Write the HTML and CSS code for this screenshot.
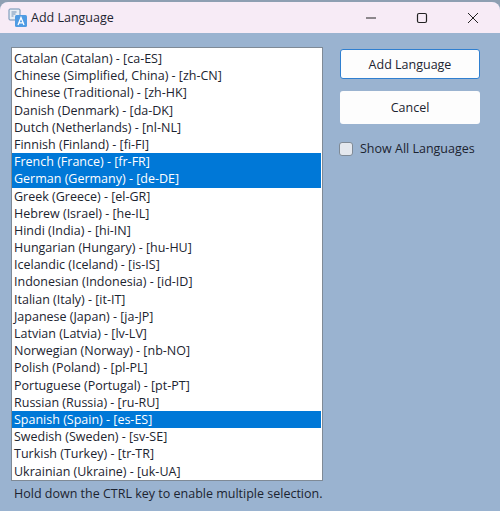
FILE: index.html
```html
<!DOCTYPE html>
<html lang="en">
<head>
    <meta charset="UTF-8">
    <meta name="viewport" content="width=device-width, initial-scale=1.0">
    <title>Add Language</title>
    <link rel="stylesheet" href="styles.css">
</head>
<body>
    <div class="dialog">
        <div class="titlebar">
            <svg class="app-icon" width="20" height="20" viewBox="0 0 20 20">
                <rect x="1" y="1" width="11" height="11" rx="1" fill="#e8eef5" stroke="#6d8fb3"/>
                <path d="M3.500 4h5M3.500 6h4M3.500 8h2" fill="none" stroke="#6d8fb3"/>
                <rect x="7" y="7" width="12" height="12" rx="1.500" fill="#4f9be3"/>
                <path d="M10 17l3-7.500 3 7.500M11 14.800h4" fill="none" stroke="#fff" stroke-width="1.300"/>
            </svg>
            <span class="title">Add Language</span>
            <div class="window-buttons">
                <svg width="12" height="12" viewBox="0 0 12 12"><path d="M1 6h10" stroke="#222" fill="none"/></svg>
                <svg width="12" height="12" viewBox="0 0 12 12"><rect x="1.500" y="1.500" width="9" height="9" rx="1.500" stroke="#222" stroke-width="1.200" fill="none"/></svg>
                <svg width="12" height="12" viewBox="0 0 12 12"><path d="M1 1l10 10M11 1L1 11" stroke="#222" fill="none"/></svg>
            </div>
        </div>
        <div class="content">
            <div class="left">
                <div class="list">
                    <div class="item">Catalan (Catalan) - [ca-ES]</div>
                    <div class="item">Chinese (Simplified, China) - [zh-CN]</div>
                    <div class="item">Chinese (Traditional) - [zh-HK]</div>
                    <div class="item">Danish (Denmark) - [da-DK]</div>
                    <div class="item">Dutch (Netherlands) - [nl-NL]</div>
                    <div class="item">Finnish (Finland) - [fi-FI]</div>
                    <div class="item selected">French (France) - [fr-FR]</div>
                    <div class="item selected">German (Germany) - [de-DE]</div>
                    <div class="item">Greek (Greece) - [el-GR]</div>
                    <div class="item">Hebrew (Israel) - [he-IL]</div>
                    <div class="item">Hindi (India) - [hi-IN]</div>
                    <div class="item">Hungarian (Hungary) - [hu-HU]</div>
                    <div class="item">Icelandic (Iceland) - [is-IS]</div>
                    <div class="item">Indonesian (Indonesia) - [id-ID]</div>
                    <div class="item">Italian (Italy) - [it-IT]</div>
                    <div class="item">Japanese (Japan) - [ja-JP]</div>
                    <div class="item">Latvian (Latvia) - [lv-LV]</div>
                    <div class="item">Norwegian (Norway) - [nb-NO]</div>
                    <div class="item">Polish (Poland) - [pl-PL]</div>
                    <div class="item">Portuguese (Portugal) - [pt-PT]</div>
                    <div class="item">Russian (Russia) - [ru-RU]</div>
                    <div class="item selected">Spanish (Spain) - [es-ES]</div>
                    <div class="item">Swedish (Sweden) - [sv-SE]</div>
                    <div class="item">Turkish (Turkey) - [tr-TR]</div>
                    <div class="item">Ukrainian (Ukraine) - [uk-UA]</div>
                </div>
                <div class="hint">Hold down the CTRL key to enable multiple selection.</div>
            </div>
            <div class="side">
                <div class="btn primary">Add Language</div>
                <div class="btn">Cancel</div>
                <div class="check-row">
                    <span class="check"></span>
                    <span>Show All Languages</span>
                </div>
            </div>
        </div>
    </div>
</body>
</html>
```

FILE: styles.css
```css
body {
    margin: 0;
    width: 500px;
    height: 511px;
    overflow: hidden;
    background: #8e9fb2;
    font-family: "Open Sans", "Noto Sans", sans-serif;
    font-size: 12.5px;
    color: #1c2430;
}
.dialog {
    height: 509px;
    margin-top: 2px;
    background: #9ab3d0;
    border-radius: 8px 8px 0 0;
}
.titlebar {
    display: flex;
    align-items: center;
    height: 31px;
    background: #f7ebf6;
    border-radius: 8px 8px 0 0;
    padding: 0 21px 0 8px;
}
.app-icon {
    margin-right: 3px;
}
.title {
    flex: 1;
}
.window-buttons {
    display: flex;
    gap: 39px;
}
.content {
    display: flex;
    padding: 14px 0 0 11px;
}
.left {
    width: 312px;
}
.list {
    background: #fff;
    border: 1px solid #7f8a96;
    height: 434px;
    padding-top: 2px;
    box-sizing: border-box;
}
.item {
    height: 17.190px;
    line-height: 17.190px;
    padding-left: 2px;
    margin-right: 1px;
    white-space: nowrap;
}
.item.selected {
    background: #0078d7;
    color: #fff;
}
.hint {
    margin: 4px 0 0 3px;
    white-space: nowrap;
}
.side {
    display: flex;
    flex-direction: column;
    margin: 2px 0 0 17px;
    width: 140px;
}
.btn {
    display: flex;
    align-items: center;
    justify-content: center;
    height: 33px;
    background: #fdfdfd;
    border-radius: 3px;
    margin-bottom: 16px;
}
.btn.primary {
    height: 28px;
    border: 1px solid #2f7fd0;
    margin-bottom: 12px;
}
.check-row {
    display: flex;
    align-items: center;
    gap: 7px;
    margin-left: -1px;
    white-space: nowrap;
}
.check {
    width: 12px;
    height: 12px;
    background: #e4e8ee;
    border: 1px solid #7f8a96;
    border-radius: 3px;
}
```
